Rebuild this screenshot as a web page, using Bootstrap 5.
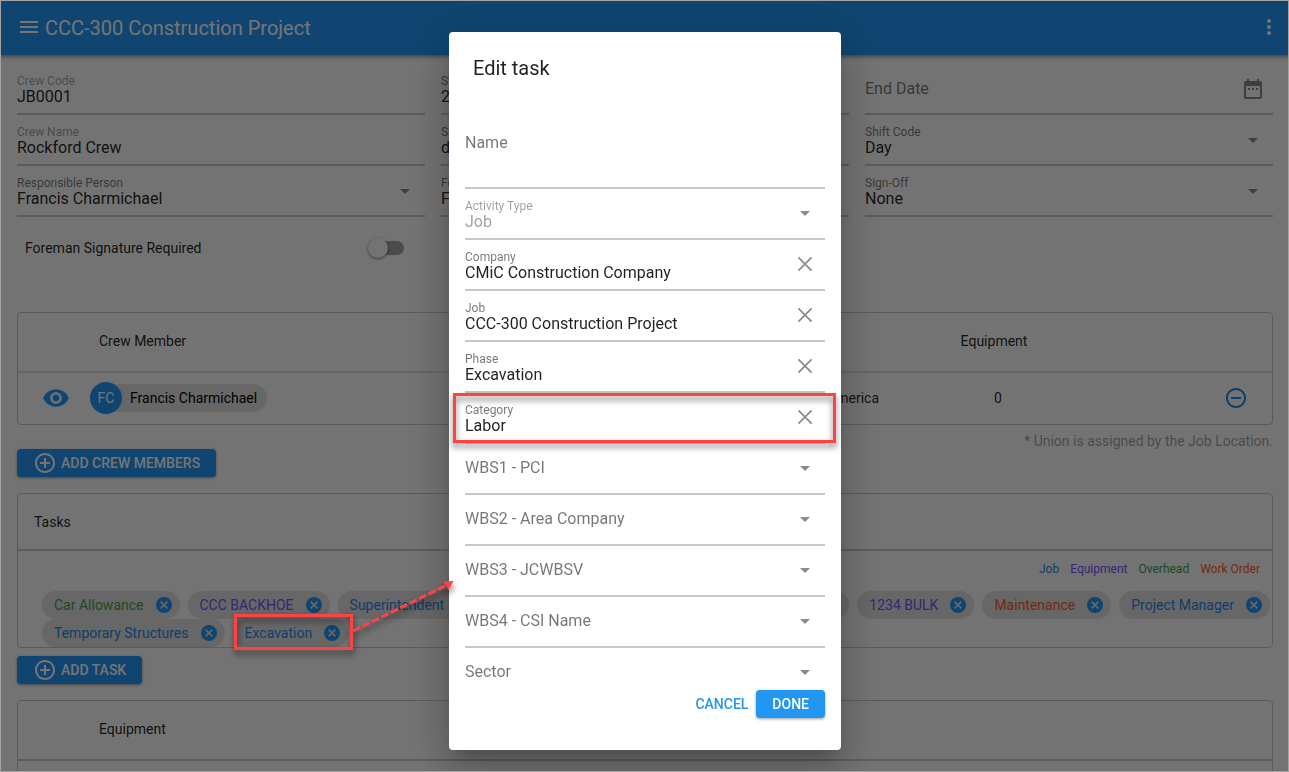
<!DOCTYPE html>
<html lang="en">
<head>
<meta charset="utf-8">
<meta name="viewport" content="width=device-width, initial-scale=1">
<title>CCC-300 Construction Project</title>
<link href="https://cdn.jsdelivr.net/npm/bootstrap@5.3.0/dist/css/bootstrap.min.css" rel="stylesheet">
<style>
  :root { --blue: #2196f3; --ink: rgba(0,0,0,.87); --soft: rgba(0,0,0,.54); --faint: rgba(0,0,0,.38); --line: #c6c6c6; }
  body { font-family: Roboto, sans-serif; font-size: 14px; line-height: 20px; color: var(--ink); background: #fafafa; height: 100vh; overflow: hidden; }
  body::after { content: ""; position: fixed; inset: 0; border: 1px solid #a3a3a3; z-index: 1080; pointer-events: none; }
  svg { display: block; fill: currentColor; }
  .ic { width: 24px; height: 24px; }
  .plain { border: 0; background: none; padding: 0; color: inherit; }

  .appbar { background: var(--blue); color: #fff; height: 55px; padding: 0 8px 0 17px; box-shadow: 0 2px 4px rgba(0,0,0,.4); position: relative; }
  .appbar h1 { font-size: 20px; line-height: 24px; font-weight: 400; }
  .appbar .plain { padding-bottom: 2px; }
  .sheet { padding: 9px 16px 0 17px; }
  .fields { display: grid; grid-template-columns: repeat(3, 1fr); column-gap: 16px; }

  /* form field: floating label and control share one cell, trailing icon in the next */
  .fld { display: grid; grid-template-columns: 1fr auto; grid-template-rows: 1fr; min-height: 51px; border-bottom: 2px solid var(--line); position: relative; }
  .fld > label { grid-area: 1/1; align-self: start; padding-top: 10px; font-size: 12px; line-height: 14px; color: var(--soft); pointer-events: none; }
  .fld > input, .fld > select { grid-area: 1/1; appearance: none; border: 0; background: none; outline: 0; padding: 24px 0 7px; font-size: 16px; line-height: 18px; height: 49px; color: var(--ink); width: 100%; min-width: 0; opacity: 1; }
  .fld > input { padding: 23px 0 8px; }
  .fld > .trail { grid-area: 1/2; margin: 12px 8px 0 0; align-self: start; color: #8a8a8a; }
  .sheet .trail { margin-top: 13px; }
  .fld.unset > label { font-size: 16px; line-height: 28px; }
  .sheet .fld.unset > label { padding-top: 11px; }
  .fld.tall { min-height: 85px; }
  .fld.tall > label { padding-top: 25px; }
  .fld.tall > input { height: 83px; }
  .fld.faded > label { color: var(--faint); }
  .fld.off > label, .fld.off > select { color: var(--faint); }

  .toggle-row { width: calc((100% - 32px) / 3); height: 62px; padding: 0 21px 0 8px; margin-bottom: 33px; }
  .toggle { appearance: none; width: 30px; height: 14px; border-radius: 7px; background: #a3a3a3; margin: 0; position: relative; }
  .toggle::before { content: ""; position: absolute; left: -6px; top: -3px; width: 20px; height: 20px; border-radius: 50%; background: #fafafa; box-shadow: 0 1px 3px rgba(0,0,0,.5); }

  .panel { border: 1px solid #c4c4c4; border-radius: 4px; }
  .panel-top { height: 57px; padding: 0 16px; border-bottom: 2px solid #cacaca; }
  .crew { --bs-table-bg: transparent; border-collapse: separate; border-spacing: 0; table-layout: fixed; margin: 0; color: inherit; }
  .crew > thead > tr > th { height: 60px; font-weight: 400; padding: 0 9px 2px; border-bottom: 2px solid #dedede; vertical-align: middle; }
  .crew > tbody > tr > td { height: 51px; padding: 0 8px 2px; border: 0; vertical-align: middle; }
  .crew.strong > thead > tr > th { border-color: #c8c8c8; }
  .c-eye { width: 72px; }
  .c-equip { width: 214px; }
  .c-act { width: 171px; }
  .crew > tbody > tr > td.flush { padding-left: 0; }
  .eye { width: 28px; height: 28px; margin: 6px 0 0 16px; color: var(--blue); }
  .person { display: inline-flex; align-items: center; gap: 8px; height: 28px; border-radius: 14px; padding-right: 10px; background: #e0e0e0; color: #000; }
  .avatar { width: 32px; height: 32px; border-radius: 50%; background: var(--blue); color: #fff; display: grid; place-items: center; }

  .b-main, .b-flat { font-size: 14px; line-height: 20px; font-weight: 500; padding: 4px 16px; border: 0; border-radius: 4px; display: inline-flex; align-items: center; gap: 4px; }
  .b-main, .b-main:hover { background: var(--blue); color: #fff; box-shadow: 0 1px 3px rgba(0,0,0,.4); }
  .b-main svg { margin: -2px 0; }
  .b-flat { color: var(--blue); padding: 4px 8px; }
  .note { line-height: 32px; color: var(--faint); }

  .legend { font-size: 12px; line-height: 18px; gap: 11px; padding: 9px 12px 13px; }
  .chips { padding: 0 2px 0 24px; column-gap: 8px; }
  .chip { display: inline-flex; align-items: center; justify-content: space-between; gap: 12px; height: 28px; border-radius: 14px; padding: 0 8px 0 12px; background: #e0e0e0; }
  .chip svg { width: 16px; height: 16px; color: var(--blue); }
  .k-job { color: #1e88e5; }
  .k-equip { color: #7c4dff; }
  .k-over { color: #43a047; }
  .k-work { color: #ff5722; }

  .modal-backdrop { --bs-backdrop-opacity: .54; }
  .modal { --bs-modal-width: 392px; padding-left: 1px; overflow: hidden; }
  .modal-dialog { margin: 32px auto; }
  .modal-content { border: 0; border-radius: 4px; color: var(--ink); background: #fff; box-shadow: 0 11px 15px -7px rgba(0,0,0,.2), 0 24px 38px 3px rgba(0,0,0,.14), 0 9px 46px 8px rgba(0,0,0,.12); }
  .modal-header { height: 72px; padding: 0 24px; border: 0; }
  .modal-title { font-size: 20px; line-height: 24px; font-weight: 400; }
  .modal-body { padding: 0 16px; max-height: calc(100vh - 190px); overflow: hidden; }
  .modal-foot { padding: 4px 16px 32px; }
  .callout { position: absolute; inset: 0 -11px -1px -12px; border: 3px solid #ff4343; filter: drop-shadow(0 4px 3px rgba(0,0,0,.55)); pointer-events: none; z-index: 1; }
  .pointer { position: absolute; left: 0; top: 0; z-index: 1060; pointer-events: none; filter: drop-shadow(1px 4px 3px rgba(0,0,0,.55)); }
</style>
</head>
<body>
<svg width="0" height="0" class="position-absolute" aria-hidden="true">
  <symbol id="i-drop" viewBox="0 0 24 24"><path d="M7 10l5 5 5-5z"/></symbol>
  <symbol id="i-close" viewBox="0 0 24 24"><path d="M5.400 5.400L18.600 18.600M18.600 5.400L5.400 18.600" fill="none" stroke="currentColor" stroke-width="1.700"/></symbol>
  <symbol id="i-cancel" viewBox="0 0 20 20"><path d="M10 0a10 10 0 1 0 0 20 10 10 0 0 0 0-20zm5 13.590L13.590 15 10 11.410 6.410 15 5 13.590 8.590 10 5 6.410 6.410 5 10 8.590 13.590 5 15 6.410 11.410 10z"/></symbol>
  <symbol id="i-add" viewBox="0 0 24 24"><path d="M13 7h-2v4H7v2h4v4h2v-4h4v-2h-4V7zm-1-5C6.480 2 2 6.480 2 12s4.480 10 10 10 10-4.480 10-10S17.520 2 12 2zm0 18c-4.410 0-8-3.590-8-8s3.590-8 8-8 8 3.590 8 8-3.590 8-8 8z"/></symbol>
</svg>

<header class="appbar d-flex align-items-center">
  <button class="plain" aria-label="Menu"><svg class="ic" viewBox="0 0 24 24"><path d="M3 18h18v-2H3v2zm0-5h18v-2H3v2zm0-7v2h18V6H3z"/></svg></button>
  <h1 class="m-0 ms-1">CCC-300 Construction Project</h1>
  <button class="plain ms-auto" aria-label="More"><svg class="ic" viewBox="0 0 24 24"><path d="M12 8a2 2 0 1 0 0-4 2 2 0 0 0 0 4zm0 2a2 2 0 1 0 0 4 2 2 0 0 0 0-4zm0 6a2 2 0 1 0 0 4 2 2 0 0 0 0-4z"/></svg></button>
</header>

<main class="sheet">
  <div class="fields">
    <div class="fld faded"><label for="code">Crew Code</label><input id="code" value="JB0001"></div>
    <div class="fld"><label for="start">Start</label><input id="start" value="2021"></div>
    <div class="fld unset"><label for="end">End Date</label><input id="end"><svg class="ic trail" viewBox="0 0 24 24"><path d="M9 11H7v2h2v-2zm4 0h-2v2h2v-2zm4 0h-2v2h2v-2zm2-7h-1V2h-2v2H8V2H6v2H5c-1.110 0-1.990.9-1.990 2L3 20c0 1.100.890 2 2 2h14c1.100 0 2-.9 2-2V6c0-1.100-.9-2-2-2zm0 16H5V9h14v11z"/></svg></div>
    <div class="fld faded"><label for="cname">Crew Name</label><input id="cname" value="Rockford Crew"></div>
    <div class="fld"><label for="seq">Seq</label><input id="seq" value="day"></div>
    <div class="fld"><label for="shift">Shift Code</label><select id="shift"><option>Day</option></select><svg class="ic trail"><use href="#i-drop"/></svg></div>
    <div class="fld"><label for="resp">Responsible Person</label><select id="resp"><option>Francis Charmichael</option></select><svg class="ic trail"><use href="#i-drop"/></svg></div>
    <div class="fld"><label for="fore">Foreman</label><select id="fore"><option>Francis Charmichael</option></select><svg class="ic trail"><use href="#i-drop"/></svg></div>
    <div class="fld"><label for="sign">Sign-Off</label><select id="sign"><option>None</option></select><svg class="ic trail"><use href="#i-drop"/></svg></div>
  </div>

  <div class="toggle-row d-flex align-items-center justify-content-between">
    <label for="sigreq">Foreman Signature Required</label>
    <input class="toggle" type="checkbox" role="switch" id="sigreq">
  </div>

  <section class="panel">
    <table class="table crew">
      <thead><tr><th class="c-eye"></th><th>Crew Member</th><th>Union</th><th class="c-equip text-center">Equipment</th><th class="c-act"></th></tr></thead>
      <tbody><tr>
        <td><button class="plain" aria-label="View"><svg class="eye" viewBox="0 0 24 24"><path d="M12 4.500C7 4.500 2.730 7.610 1 12c1.730 4.390 6 7.500 11 7.500s9.270-3.110 11-7.500c-1.730-4.390-6-7.500-11-7.500zM12 17c-2.760 0-5-2.240-5-5s2.240-5 5-5 5 2.240 5 5-2.240 5-5 5zm0-8c-1.660 0-3 1.340-3 3s1.340 3 3 3 3-1.340 3-3-1.340-3-3-3z"/></svg></button></td>
        <td class="flush"><span class="person"><span class="avatar">FC</span>Francis Charmichael</span></td>
        <td class="text-end">Laborers Union of America</td>
        <td class="text-center ps-3">0</td>
        <td class="pe-4"><button class="plain d-block ms-auto k-job" aria-label="Remove"><svg class="ic" viewBox="0 0 24 24"><path d="M7 11v2h10v-2H7zm5-9C6.480 2 2 6.480 2 12s4.480 10 10 10 10-4.480 10-10S17.520 2 12 2zm0 18c-4.410 0-8-3.590-8-8s3.590-8 8-8 8 3.590 8 8-3.590 8-8 8z"/></svg></button></td>
      </tr></tbody>
    </table>
  </section>

  <div class="d-flex justify-content-between align-items-start mb-3">
    <button class="btn b-main mt-4"><svg class="ic"><use href="#i-add"/></svg>ADD CREW MEMBERS</button>
    <span class="note">* Union is assigned by the Job Location.</span>
  </div>

  <section class="panel mb-2">
    <div class="panel-top d-flex align-items-center">Tasks</div>
    <div class="legend d-flex justify-content-end"><span class="k-job">Job</span><span class="k-equip">Equipment</span><span class="k-over">Overhead</span><span class="k-work">Work Order</span></div>
    <div class="chips d-flex flex-wrap">
      <span class="chip k-over">Car Allowance<button class="plain" aria-label="Remove"><svg><use href="#i-cancel"/></svg></button></span>
      <span class="chip k-equip">CCC BACKHOE<button class="plain" aria-label="Remove"><svg><use href="#i-cancel"/></svg></button></span>
      <span class="chip k-job">Superintendent<button class="plain" aria-label="Remove"><svg><use href="#i-cancel"/></svg></button></span>
      <span class="chip k-job">General Conditions<button class="plain" aria-label="Remove"><svg><use href="#i-cancel"/></svg></button></span>
      <span class="chip k-job flex-grow-1">Site Preparation<button class="plain me-4" aria-label="Remove"><svg><use href="#i-cancel"/></svg></button></span>
      <span class="chip k-equip">1234 BULK<button class="plain" aria-label="Remove"><svg><use href="#i-cancel"/></svg></button></span>
      <span class="chip k-work">Maintenance<button class="plain" aria-label="Remove"><svg><use href="#i-cancel"/></svg></button></span>
      <span class="chip k-job">Project Manager<button class="plain" aria-label="Remove"><svg><use href="#i-cancel"/></svg></button></span>
      <span class="chip k-job">Temporary Structures<button class="plain" aria-label="Remove"><svg><use href="#i-cancel"/></svg></button></span>
      <span class="chip k-job">Excavation<button class="plain" aria-label="Remove"><svg><use href="#i-cancel"/></svg></button></span>
    </div>
  </section>
  <button class="btn b-main mb-3"><svg class="ic"><use href="#i-add"/></svg>ADD TASK</button>

  <section class="panel">
    <table class="table crew strong">
      <thead><tr><th class="c-eye"></th><th>Equipment</th><th class="c-act"></th></tr></thead>
      <tbody><tr><td></td><td></td><td></td></tr></tbody>
    </table>
  </section>
</main>

<div class="modal-backdrop show"></div>
<div class="modal show d-block" role="dialog" aria-modal="true" aria-labelledby="dlg-title">
  <div class="modal-dialog">
    <form class="modal-content">
      <div class="modal-header"><h2 class="modal-title" id="dlg-title">Edit task</h2></div>
      <div class="modal-body">
        <div class="fld unset tall"><label for="t-name">Name</label><input id="t-name"></div>
        <div class="fld off"><label for="t-type">Activity Type</label><select id="t-type" disabled><option>Job</option></select><svg class="ic trail"><use href="#i-drop"/></svg></div>
        <div class="fld"><label for="t-comp">Company</label><input id="t-comp" value="CMiC Construction Company"><button type="button" class="plain trail" aria-label="Clear company"><svg class="ic"><use href="#i-close"/></svg></button></div>
        <div class="fld"><label for="t-job">Job</label><input id="t-job" value="CCC-300 Construction Project"><button type="button" class="plain trail" aria-label="Clear job"><svg class="ic"><use href="#i-close"/></svg></button></div>
        <div class="fld"><label for="t-phase">Phase</label><input id="t-phase" value="Excavation"><button type="button" class="plain trail" aria-label="Clear phase"><svg class="ic"><use href="#i-close"/></svg></button></div>
        <div class="fld"><label for="t-cat">Category</label><input id="t-cat" value="Labor"><button type="button" class="plain trail" aria-label="Clear category"><svg class="ic"><use href="#i-close"/></svg></button><span class="callout"></span></div>
        <div class="fld unset"><label for="t-w1">WBS1 - PCI</label><select id="t-w1"><option></option></select><svg class="ic trail"><use href="#i-drop"/></svg></div>
        <div class="fld unset"><label for="t-w2">WBS2 - Area Company</label><select id="t-w2"><option></option></select><svg class="ic trail"><use href="#i-drop"/></svg></div>
        <div class="fld unset"><label for="t-w3">WBS3 - JCWBSV</label><select id="t-w3"><option></option></select><svg class="ic trail"><use href="#i-drop"/></svg></div>
        <div class="fld unset"><label for="t-w4">WBS4 - CSI Name</label><select id="t-w4"><option></option></select><svg class="ic trail"><use href="#i-drop"/></svg></div>
        <div class="fld unset"><label for="t-sec">Sector</label><select id="t-sec"><option></option></select><svg class="ic trail"><use href="#i-drop"/></svg></div>
      </div>
      <div class="modal-foot d-flex justify-content-end">
        <button type="button" class="btn b-flat">CANCEL</button>
        <button type="button" class="btn b-main">DONE</button>
      </div>
    </form>
  </div>
</div>

<svg class="pointer" width="470" height="670" aria-hidden="true">
  <rect x="235.500" y="615.500" width="116" height="33" fill="none" stroke="#ff4343" stroke-width="3"/>
  <path d="M353 631L447 585" stroke="#ff4343" stroke-width="3" stroke-dasharray="8 2.500"/>
  <path d="M443.500 581.500l10-.5-5 9z" fill="#ff4343"/>
</svg>
<script src="https://cdn.jsdelivr.net/npm/bootstrap@5.3.0/dist/js/bootstrap.bundle.min.js"></script>
</body>
</html>
